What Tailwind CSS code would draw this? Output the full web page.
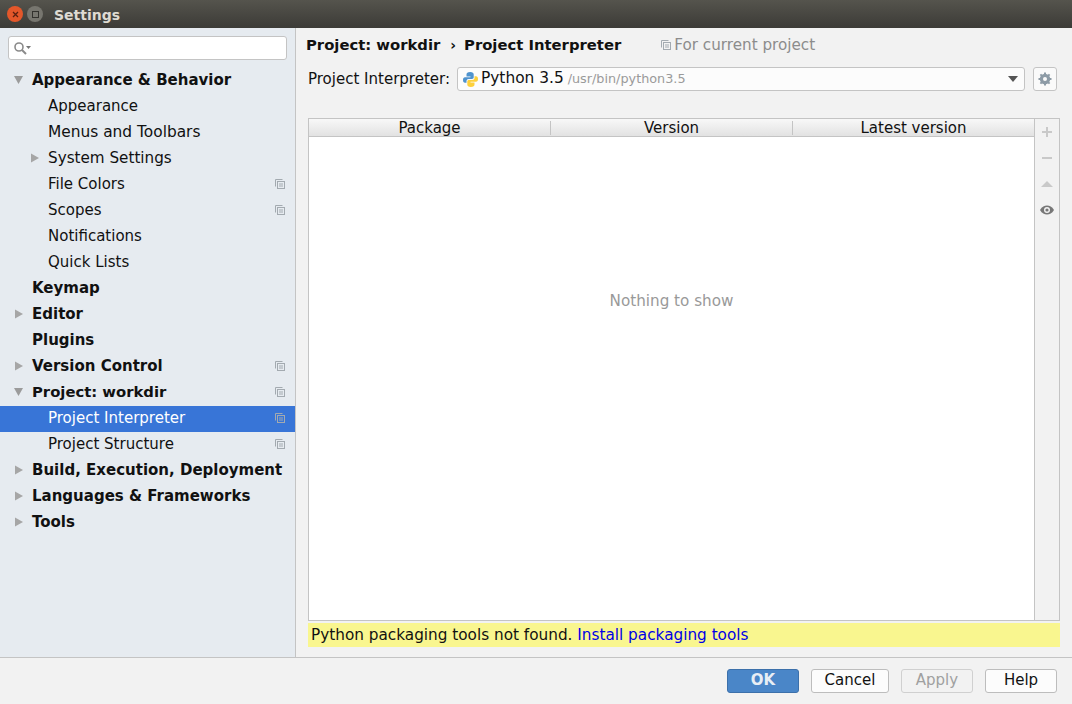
<!DOCTYPE html>
<html lang="en">

<head>
  <meta charset="UTF-8">
  <title>Settings</title>
  <script src="https://cdn.jsdelivr.net/npm/@tailwindcss/browser@4"></script>
</head>

<body class="bg-[#f2f2f2] text-[#111] font-['DejaVu_Sans',sans-serif] text-[15px] overflow-hidden">

  <div class="w-[1072px] h-[704px] flex flex-col">

    <!-- Title bar -->
    <header class="h-[28px] shrink-0 bg-gradient-to-b from-[#55544d] to-[#3c3b37] flex items-center pl-[7px]">
      <div class="w-[16px] h-[16px] rounded-full bg-[#e4572a] flex items-center justify-center">
        <svg width="7" height="7" viewBox="0 0 7 7"><path d="M1 1l5 5M6 1l-5 5" stroke="#5a2010" stroke-width="1.3"/></svg>
      </div>
      <div class="ml-[4px] w-[16px] h-[16px] rounded-full bg-[#77766f] flex items-center justify-center">
        <div class="w-[7px] h-[7px] border border-[#33322e]"></div>
      </div>
      <span class="ml-[11px] mt-[2px] text-[14px] font-bold text-[#dfdbd2]">Settings</span>
    </header>

    <div class="flex-1 flex min-h-0">

      <!-- Sidebar -->
      <aside class="w-[296px] shrink-0 bg-[#e6ebf0] border-r border-[#c4c4c4] flex flex-col">
        <div class="h-[24px] mt-[8px] mx-[8px] w-[279px] bg-white border border-[#c4c4c4] rounded-[3px] flex items-center pl-[4px]">
          <svg width="18" height="14" viewBox="0 0 18 14" fill="none"><circle cx="6" cy="6" r="4" stroke="#8a8a8a" stroke-width="1.6"/><path d="M9 9l4 4" stroke="#8a8a8a" stroke-width="2"/><path d="M13 5h5l-2.500 3z" fill="#777"/></svg>
        </div>

        <ul class="mt-[7px] leading-[26px] whitespace-nowrap">
          <li class="h-[26px] flex items-center font-bold pl-[14px]"><svg class="w-[18px]" width="18" height="10" viewBox="0 0 18 10"><path d="M0 1h9l-4.500 8z" fill="#9b9b9b"/></svg><span>Appearance &amp; Behavior</span></li>
          <li class="h-[26px] pl-[48px]">Appearance</li>
          <li class="h-[26px] pl-[48px] text-[15.400px]">Menus and Toolbars</li>
          <li class="h-[26px] flex items-center pl-[31px] text-[15.200px]"><svg class="w-[17px]" width="17" height="10" viewBox="0 0 17 10"><path d="M0 .5l8 4.500-8 4.500z" fill="#a6a6a6"/></svg><span>System Settings</span></li>
          <li class="h-[26px] pl-[48px] pr-[10px] flex items-center justify-between"><span>File Colors</span><svg width="10" height="10" viewBox="0 0 10 10" fill="none" stroke="#a3aab0"><path d="M.5 7.500v-7h7"/><rect x="2.500" y="2.500" width="7" height="7"/><path d="M4 5h4M4 7h4"/></svg></li>
          <li class="h-[26px] pl-[48px] pr-[10px] flex items-center justify-between"><span>Scopes</span><svg width="10" height="10" viewBox="0 0 10 10" fill="none" stroke="#a3aab0"><path d="M.5 7.500v-7h7"/><rect x="2.500" y="2.500" width="7" height="7"/><path d="M4 5h4M4 7h4"/></svg></li>
          <li class="h-[26px] pl-[48px]">Notifications</li>
          <li class="h-[26px] pl-[48px]">Quick Lists</li>
          <li class="h-[26px] pl-[32px] font-bold">Keymap</li>
          <li class="h-[26px] flex items-center font-bold pl-[15px]"><svg class="w-[17px]" width="17" height="10" viewBox="0 0 17 10"><path d="M0 .5l8 4.500-8 4.500z" fill="#a6a6a6"/></svg><span>Editor</span></li>
          <li class="h-[26px] pl-[32px] font-bold">Plugins</li>
          <li class="h-[26px] flex items-center justify-between font-bold pl-[15px] pr-[10px]"><span class="flex items-center"><svg class="w-[17px]" width="17" height="10" viewBox="0 0 17 10"><path d="M0 .5l8 4.500-8 4.500z" fill="#a6a6a6"/></svg>Version Control</span><svg width="10" height="10" viewBox="0 0 10 10" fill="none" stroke="#a3aab0"><path d="M.5 7.500v-7h7"/><rect x="2.500" y="2.500" width="7" height="7"/><path d="M4 5h4M4 7h4"/></svg></li>
          <li class="h-[26px] flex items-center justify-between font-bold pl-[14px] pr-[10px]"><span class="flex items-center"><svg class="w-[18px]" width="18" height="10" viewBox="0 0 18 10"><path d="M0 1h9l-4.500 8z" fill="#9b9b9b"/></svg><span class="text-[14.800px]">Project: workdir</span></span><svg width="10" height="10" viewBox="0 0 10 10" fill="none" stroke="#a3aab0"><path d="M.5 7.500v-7h7"/><rect x="2.500" y="2.500" width="7" height="7"/><path d="M4 5h4M4 7h4"/></svg></li>
          <li class="h-[26px] mt-[1px] mb-[-1px] pb-[2px] pl-[48px] pr-[10px] flex items-center justify-between bg-[#3875d7] text-white"><span>Project Interpreter</span><svg width="10" height="10" viewBox="0 0 10 10" fill="none" stroke="#a3aab0"><path d="M.5 7.500v-7h7"/><rect x="2.500" y="2.500" width="7" height="7"/><path d="M4 5h4M4 7h4"/></svg></li>
          <li class="h-[26px] pl-[48px] pr-[10px] flex items-center justify-between"><span>Project Structure</span><svg width="10" height="10" viewBox="0 0 10 10" fill="none" stroke="#a3aab0"><path d="M.5 7.500v-7h7"/><rect x="2.500" y="2.500" width="7" height="7"/><path d="M4 5h4M4 7h4"/></svg></li>
          <li class="h-[26px] flex items-center font-bold pl-[15px]"><svg class="w-[17px]" width="17" height="10" viewBox="0 0 17 10"><path d="M0 .5l8 4.500-8 4.500z" fill="#a6a6a6"/></svg><span>Build, Execution, Deployment</span></li>
          <li class="h-[26px] flex items-center font-bold pl-[15px]"><svg class="w-[17px]" width="17" height="10" viewBox="0 0 17 10"><path d="M0 .5l8 4.500-8 4.500z" fill="#a6a6a6"/></svg><span>Languages &amp; Frameworks</span></li>
          <li class="h-[26px] flex items-center font-bold pl-[15px]"><svg class="w-[17px]" width="17" height="10" viewBox="0 0 17 10"><path d="M0 .5l8 4.500-8 4.500z" fill="#a6a6a6"/></svg><span>Tools</span></li>
        </ul>
      </aside>

      <!-- Main panel -->
      <main class="flex-1 min-w-0 flex flex-col pl-[12px] pr-[12px]">
        <div class="h-[16px] mt-[9px] flex items-center whitespace-nowrap">
          <span class="font-bold ml-[-2px] text-[14.800px]">Project: workdir</span>
          <span class="font-bold ml-[10px] text-[14px]">›</span>
          <span class="font-bold ml-[8px] text-[14.800px]">Project Interpreter</span>
          <svg class="ml-[40px]" width="10" height="10" viewBox="0 0 10 10" fill="none" stroke="#a3aab0"><path d="M.5 7.500v-7h7"/><rect x="2.500" y="2.500" width="7" height="7"/><path d="M4 5h4M4 7h4"/></svg>
          <span class="ml-[3px] text-[#8c8c8c] text-[15.200px]">For current project</span>
        </div>

        <div class="mt-[14px] h-[24px] flex items-center whitespace-nowrap">
          <span>Project Interpreter:</span>
          <div class="ml-[7px] w-[568px] h-[24px] bg-[#fcfcfc] border border-[#c4c4c4] rounded-[3px] flex items-center pl-[5px] pr-[6px]">
            <svg width="15" height="15" viewBox="0 0 15 15"><path d="M7.200 0C4.500 0 3.500 1 3.500 2.500V4.500H7.500V5.200H2C.7 5.200 0 6.200 0 8s.7 2.800 2 2.800H3.500V9C3.500 7.700 4.500 7 5.500 7H9C10 7 10.700 6.300 10.700 5.300V2.500C10.700 1 9.700 0 7.200 0z" fill="#4f93ce"/><path d="M7.800 15c2.700 0 3.700-1 3.700-2.500V10.500H7.500V9.800H13C14.300 9.800 15 8.800 15 7S14.300 4.200 13 4.200H11.500V6C11.500 7.300 10.500 8 9.500 8H6C5 8 4.300 8.700 4.300 9.700V12.500C4.300 14 5.300 15 7.800 15z" fill="#fdd03b"/></svg>
            <span class="ml-[3px] text-[15.400px]">Python 3.5</span>
            <span class="ml-[4px] text-[12.800px] text-[#9a9a9a]">/usr/bin/python3.5</span>
            <svg class="ml-auto" width="10" height="6" viewBox="0 0 10 6"><path d="M0 0h10l-5 6z" fill="#555"/></svg>
          </div>
          <button class="ml-[8px] w-[24px] h-[24px] bg-[#fafafa] border border-[#c4c4c4] rounded-[3px] flex items-center justify-center">
            <svg width="14" height="14" viewBox="0 0 14 14"><circle cx="7" cy="7" r="3.800" fill="none" stroke="#8d9ba6" stroke-width="2.800"/><path d="M7 .5v13M.5 7h13M2.400 2.400l9.200 9.200M11.600 2.400l-9.200 9.200" stroke="#8d9ba6" stroke-width="2"/><circle cx="7" cy="7" r="2" fill="#fafafa"/></svg>
          </button>
        </div>

        <!-- Package table -->
        <div class="mt-[27px] w-[752px] h-[503px] border border-[#c4c4c4] flex">
          <div class="flex-1 min-w-0 flex flex-col bg-white">
            <div class="h-[18px] shrink-0 flex items-center bg-gradient-to-b from-[#f8f8f8] to-[#e2e2e2] border-b border-[#c4c4c4] leading-[18px]">
              <div class="w-[242px] text-center border-r border-[#c4c4c4] h-[14px] flex items-center justify-center">Package</div>
              <div class="w-[242px] text-center border-r border-[#c4c4c4] h-[14px] flex items-center justify-center">Version</div>
              <div class="flex-1 text-center">Latest version</div>
            </div>
            <div class="flex-1 flex items-center justify-center text-[#999] text-[15.200px] pb-[154px]">Nothing to show</div>
          </div>
          <div class="w-[25px] shrink-0 border-l border-[#c4c4c4] bg-[#f2f2f2] flex flex-col items-center pt-[7px]">
            <svg class="h-[26px]" width="12" height="12" viewBox="0 0 12 26"><path d="M6 1v10M1 6h10" stroke="#c9c9c9" stroke-width="2"/></svg>
            <svg class="h-[26px]" width="12" height="12" viewBox="0 0 12 26"><path d="M1 6h10" stroke="#c9c9c9" stroke-width="2"/></svg>
            <svg class="h-[26px]" width="12" height="12" viewBox="0 0 12 26"><path d="M0 9l6-6 6 6z" fill="#c9c9c9"/></svg>
            <svg class="h-[26px]" width="14" height="12" viewBox="0 0 14 26"><path d="M0 6c2-3.500 4.500-4.500 7-4.500S12 2.500 14 6c-2 3.500-4.500 4.500-7 4.500S2 9.500 0 6z" fill="#777"/><circle cx="7" cy="6" r="3" fill="#f2f2f2"/><circle cx="7" cy="6" r="1.600" fill="#777"/></svg>
          </div>
        </div>

        <div class="mt-[2px] w-[752px] h-[24px] bg-[#f9f68f] pl-[3px] leading-[24px] whitespace-nowrap text-[15.270px]">
          Python packaging tools not found. <a class="text-[#0000e6]">Install packaging tools</a>
        </div>
      </main>
    </div>

    <!-- Footer -->
    <footer class="h-[47px] shrink-0 border-t border-[#c4c4c4] flex items-center justify-end pr-[15px] pb-[1px]">
      <button class="w-[72px] h-[24px] rounded-[3px] bg-[#4a86c8] border border-[#3c70aa] text-[#e8eef5] font-bold leading-none">OK</button>
      <button class="ml-[12px] w-[78px] h-[24px] rounded-[3px] bg-[#fcfcfc] border border-[#bdbdbd] leading-none">Cancel</button>
      <button class="ml-[12px] w-[72px] h-[24px] rounded-[3px] bg-[#f2f2f2] border border-[#d0d0d0] text-[#a0a0a0] leading-none">Apply</button>
      <button class="ml-[12px] w-[72px] h-[24px] rounded-[3px] bg-[#fcfcfc] border border-[#bdbdbd] leading-none">Help</button>
    </footer>

  </div>

</body>

</html>
